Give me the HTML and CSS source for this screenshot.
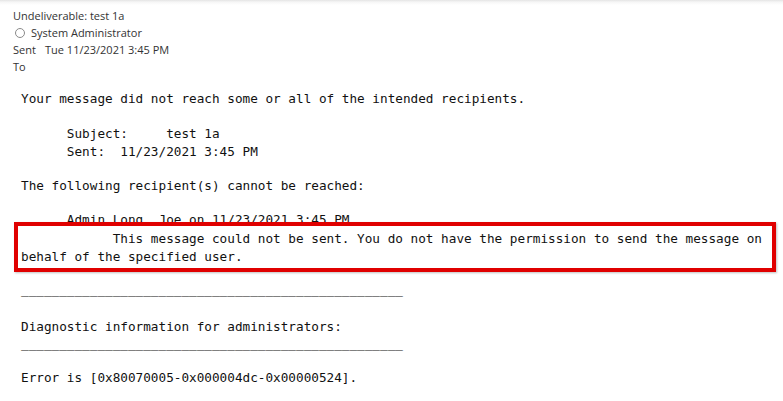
FILE: index.html
```
<!DOCTYPE html>
<html lang="en">
<head>
<meta charset="utf-8">
<title>Undeliverable: test 1a</title>
<link rel="stylesheet" href="styles.css">
</head>
<body>
<div class="page">
  <header class="hdr">
    <div class="hdr-subject">Undeliverable: test 1a</div>
    <div class="hdr-from"><span class="presence"></span>System Administrator</div>
    <div class="hdr-sent"><span class="hdr-label">Sent</span>Tue 11/23/2021 3:45 PM</div>
    <div class="hdr-to">To</div>
  </header>
  <main class="msg">
    <div class="ln intro">Your message did not reach some or all of the intended recipients.</div>
    <div class="ln details">      Subject:     test 1a</div>
    <div class="ln">      Sent:  11/23/2021 3:45 PM</div>
    <div class="ln following">The following recipient(s) cannot be reached:</div>
    <div class="ln recipient">      Admin Long, Joe on 11/23/2021 3:45 PM</div>
    <div class="callout"><div class="ln">            This message could not be sent. You do not have the permission to send the message on</div><div class="ln">behalf of the specified user.</div></div>
    <div class="ln rule1">__________________________________________________</div>
    <div class="ln diag">Diagnostic information for administrators:</div>
    <div class="ln rule2">__________________________________________________</div>
    <div class="ln error">Error is [0x80070005-0x000004dc-0x00000524].</div>
  </main>
</div>
</body>
</html>
```
FILE: styles.css
```
html, body {
  margin: 0;
  padding: 0;
  background: #ffffff;
}
.page {
  width: 783px;
  height: 401px;
  overflow: hidden;
  background: linear-gradient(to bottom, #e4e4e4 0px, #f6f6f6 2px, #ffffff 5px);
}
.hdr {
  padding: 7px 0 0 13px;
  font-family: "Open Sans", "Noto Sans", sans-serif;
  font-size: 11px;
  line-height: 17px;
  color: #333333;
}
.hdr-from {
  display: flex;
  align-items: center;
}
.presence {
  width: 8px;
  height: 8px;
  border: 1px solid #8a8a8a;
  border-radius: 50%;
  margin: 0 6px 0 2px;
  box-sizing: content-box;
}
.hdr-label {
  display: inline-block;
  width: 32px;
}
.msg {
  padding: 15px 0 0 21px;
  font-family: "DejaVu Sans Mono", "Liberation Mono", monospace;
  font-size: 12.7px;
  line-height: 18px;
  color: #111111;
}
.ln {
  white-space: pre;
}
.details { margin-top: 17px; }
.following { margin-top: 16px; }
.recipient { margin-top: 16px; }
.callout {
  position: relative;
  margin: -7px 0 0 -7px;
  width: 762px;
  box-sizing: border-box;
  border: 4px solid #e00000;
  padding: 4px 0 2px 3px;
  background: #ffffff;
  box-shadow: 1px 1px 2px rgba(0, 0, 0, 0.25);
}
.rule1 { margin-top: 9px; }
.diag { margin-top: 19px; }
.rule2 { margin-top: -1px; }
.error { margin-top: 16px; }
```
